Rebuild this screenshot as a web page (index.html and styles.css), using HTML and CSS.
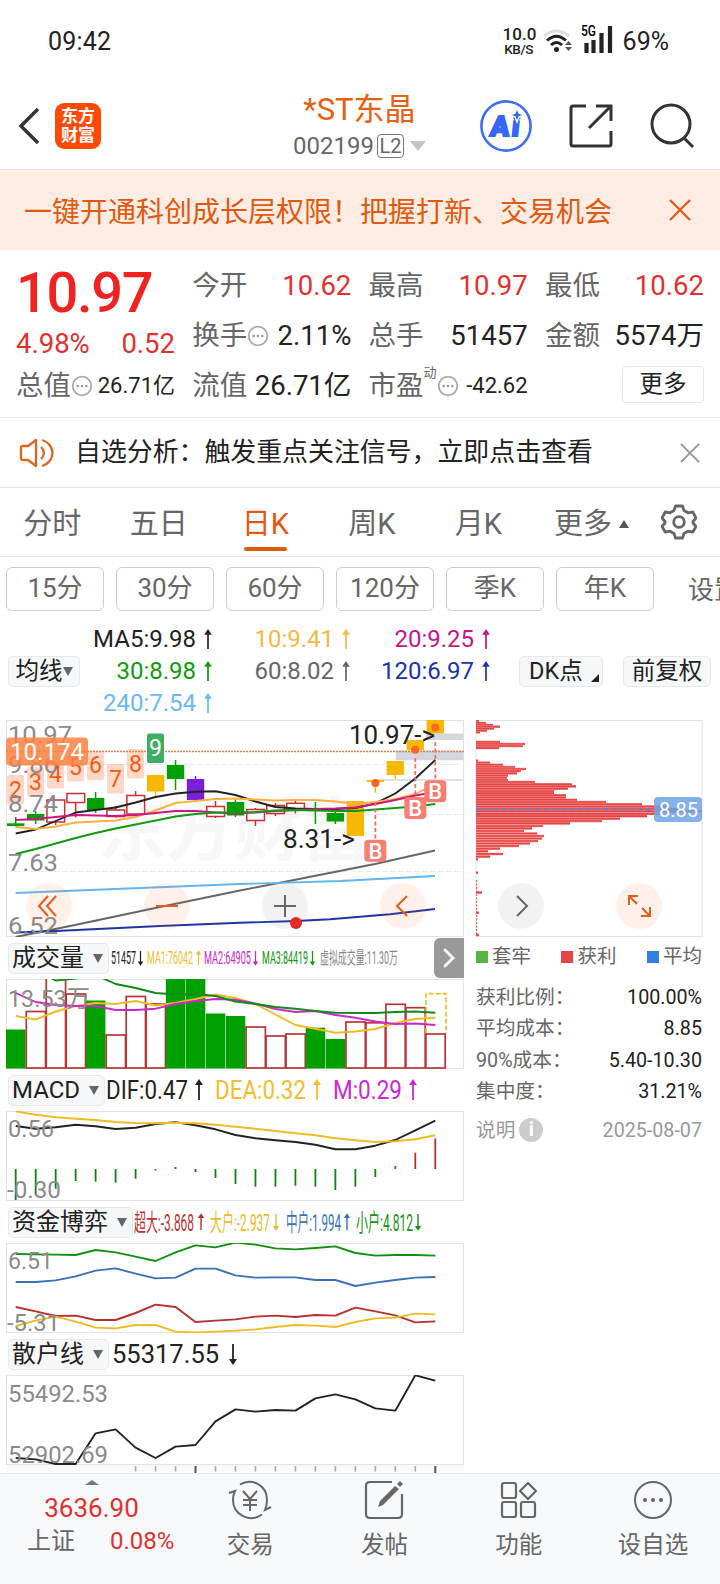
FILE: index.html
```html
<!DOCTYPE html>
<html lang="zh-CN">
<head>
    <meta charset="UTF-8">
    <meta name="viewport" content="width=device-width, initial-scale=1.0">
    <title>*ST东晶 002199</title>
    <link rel="stylesheet" href="styles.css">
</head>
<body>
    <!-- Shared icons -->
    <svg class="defs" width="0" height="0">
        <symbol id="up" viewBox="0 0 10 22"><path d="M5 21V3" fill="none" stroke="currentColor" stroke-width="1.8"/><path d="M5 0L9 6H1z" fill="currentColor"/></symbol>
        <symbol id="down" viewBox="0 0 10 22"><path d="M5 1V19" fill="none" stroke="currentColor" stroke-width="1.8"/><path d="M5 22L9 16H1z" fill="currentColor"/></symbol>
        <symbol id="dots" viewBox="0 0 22 22"><circle cx="11" cy="11" r="9.3" fill="none" stroke="#aaa" stroke-width="1.8"/><g fill="#999"><circle cx="6.7" cy="11" r="1.3"/><circle cx="11" cy="11" r="1.3"/><circle cx="15.3" cy="11" r="1.3"/></g></symbol>
        <symbol id="close" viewBox="0 0 22 22"><path d="M1 1L21 21M21 1L1 21" fill="none" stroke="currentColor" stroke-width="2.2"/></symbol>
    </svg>

    <!-- Status bar -->
    <div class="status">
        <span class="time">09:42</span>
        <div class="status-right">
            <div class="speed"><b>10.0</b><small>KB/S</small></div>
            <svg width="30" height="24" viewBox="0 0 30 24">
                <g fill="none" stroke-width="3">
                    <path d="M1 7Q13.500 -3 26 7" stroke="#ddd"/>
                    <path d="M4 11.500Q13.500 3 23 11.500" stroke="#222"/>
                    <path d="M8 16Q13.500 11 19 16" stroke="#222"/>
                </g>
                <circle cx="13.500" cy="20.500" r="2.500" fill="#222"/>
                <path d="M22 16l3.500-4 3.500 4zM22 18l3.500 4 3.500-4z" fill="#555"/>
            </svg>
            <svg class="signal" width="32" height="32" viewBox="0 0 32 32">
                <text x="0" y="12" font-size="14" font-weight="500" textLength="15" lengthAdjust="spacingAndGlyphs">5G</text>
                <path d="M5.500 19V29M12.500 16V29M20.500 9V29M29 2V29" stroke="#222" stroke-width="4.200"/>
            </svg>
            <span class="battery">69%</span>
        </div>
    </div>

    <!-- Header -->
    <div class="header">
        <svg class="back" width="22" height="38" viewBox="0 0 22 38"><path d="M20 2L3 19L20 36" fill="none" stroke="#333" stroke-width="3.500"/></svg>
        <div class="logo">东方<br>财富</div>
        <div class="title">
            <div class="name">*ST东晶</div>
            <div class="code">002199<span class="level">L2</span><i class="tri"></i></div>
        </div>
        <div class="actions">
            <svg width="54" height="54" viewBox="0 0 54 54">
                <circle cx="27" cy="27" r="24.600" fill="#fff" stroke="#3d6df5" stroke-width="2.600"/>
                <g transform="skewX(-6)"><text x="14.500" y="37" font-size="28" font-weight="900" fill="#3566f6" stroke="#3566f6" stroke-width="2" textLength="29">Ai</text></g>
                <path d="M38 9l2 5 5 2-5 2-2 5-2-5-5-2 5-2z" fill="#3566f6" stroke="#fff" stroke-width="1.500"/>
            </svg>
            <svg width="46" height="46" viewBox="0 0 46 46"><g fill="none" stroke="#333" stroke-width="3"><path d="M18 3H5Q3 3 3 5V41Q3 43 5 43H41Q43 43 43 41V28"/><path d="M28 3H43V18M43 3L21 25"/></g></svg>
            <svg width="46" height="46" viewBox="0 0 46 46"><g fill="none" stroke="#333" stroke-width="3"><circle cx="22" cy="21" r="19"/><path d="M34.500 34.500L44 44"/></g></svg>
        </div>
    </div>

    <div class="promo">
        <span>一键开通科创成长层权限！把握打新、交易机会</span>
        <svg width="22" height="22"><use href="#close"/></svg>
    </div>

    <!-- Quote -->
    <div class="quote">
        <div class="main-price">
            <div class="price">10.97</div>
            <div class="pair red change"><span>4.98%</span><span>0.52</span></div>
        </div>
        <div class="pair"><label>今开</label><span class="red">10.62</span></div>
        <div class="pair"><label>最高</label><span class="red">10.97</span></div>
        <div class="pair"><label>最低</label><span class="red">10.62</span></div>
        <div class="pair"><label>换手<svg width="22" height="22"><use href="#dots"/></svg></label><span>2.11%</span></div>
        <div class="pair"><label>总手</label><span>51457</span></div>
        <div class="pair"><label>金额</label><span>5574万</span></div>
        <div class="pair"><label>总值<svg width="22" height="22"><use href="#dots"/></svg></label><span class="small">26.71亿</span></div>
        <div class="pair"><label>流值</label><span>26.71亿</span></div>
        <div class="pair"><label>市盈<sup>动</sup><svg width="22" height="22"><use href="#dots"/></svg></label><span class="small">-42.62</span></div>
        <div class="pair"><button class="more">更多</button></div>
    </div>

    <div class="notice">
        <svg width="36" height="32" viewBox="0 0 36 32"><g fill="none" stroke="#e06420" stroke-width="2.300"><path d="M17 3V29L9 23H4Q2 23 2 21V11Q2 9 4 9H9Z" stroke-linejoin="round"/><path d="M22 10Q28 16 22 22M23 3C37 7 37 25 23 29"/></g></svg>
        <span>自选分析：触发重点关注信号，立即点击查看</span>
        <svg class="grey" width="20" height="20" viewBox="0 0 22 22"><use href="#close"/></svg>
    </div>

    <!-- Period tabs -->
    <div class="tabs">
        <span>分时</span><span>五日</span><span class="active">日K</span><span>周K</span><span>月K</span>
        <span>更多<i class="tri-up"></i></span>
        <svg width="36" height="36" viewBox="0 0 36 36"><g fill="none" stroke="#666" stroke-width="2.800" stroke-linejoin="round"><path d="M14.500 2H21.500L23 6.500L27 8.800L31.800 8L35 14L32 17.500V19L35 22.500L31.800 28L27 27.200L23 29.500L21.500 34H14.500L13 29.500L9 27.200L4.200 28L1 22.500L4 19V17.500L1 14L4.200 8L9 8.800L13 6.500Z"/><circle cx="18" cy="18" r="5.300"/></g></svg>
    </div>
    <div class="periods">
        <button>15分</button><button>30分</button><button>60分</button><button>120分</button><button>季K</button><button>年K</button><span>设置</span>
    </div>

    <!-- Moving averages -->
    <div class="ma-row">
        <button class="chip">均线<i class="tri-down"></i></button>
        <div class="ma">
            <span class="black">MA5:9.98<svg><use href="#up"/></svg></span>
            <span class="amber">10:9.41<svg><use href="#up"/></svg></span>
            <span class="pink">20:9.25<svg><use href="#up"/></svg></span>
            <span class="green">30:8.98<svg><use href="#up"/></svg></span>
            <span class="dim">60:8.02<svg><use href="#up"/></svg></span>
            <span class="navy">120:6.97<svg><use href="#up"/></svg></span>
            <span class="sky">240:7.54<svg><use href="#up"/></svg></span>
        </div>
        <button class="chip dk">DK点<i class="corner"></i></button>
        <button class="chip fq">前复权</button>
    </div>

    <div class="charts">
        <div class="left">
            <svg id="kline" class="chart" width="458" height="217" viewBox="6 720 458 217"></svg>

            <div class="bar">
                <button class="chip">成交量<i class="tri-down"></i></button>
                <svg class="legend" width="290" height="30" viewBox="110 943 290 30">
                    <g font-size="17.5">
                        <text x="111" y="964" fill="#222" textLength="25" lengthAdjust="spacingAndGlyphs">51457</text>
                        <text x="147" y="964" fill="#f0bd2b" textLength="46" lengthAdjust="spacingAndGlyphs">MA1:76042</text>
                        <text x="204" y="964" fill="#cc27cc" textLength="47" lengthAdjust="spacingAndGlyphs">MA2:64905</text>
                        <text x="262" y="964" fill="#159315" textLength="46" lengthAdjust="spacingAndGlyphs">MA3:84419</text>
                        <text x="320" y="964" fill="#888" textLength="78" lengthAdjust="spacingAndGlyphs">虚拟成交量:11.30万</text>
                    </g>
                    <use href="#down" x="137" y="950" width="7" height="16" color="#222"/>
                    <use href="#up" x="195" y="950" width="7" height="16" color="#f0bd2b"/>
                    <use href="#down" x="252" y="950" width="7" height="16" color="#cc27cc"/>
                    <use href="#down" x="309" y="950" width="7" height="16" color="#159315"/>
                </svg>
                <div class="expander"><svg width="12" height="20" viewBox="0 0 12 20"><path d="M2 2L10 10L2 18" fill="none" stroke="#fff" stroke-width="2.800" stroke-linecap="round"/></svg></div>
            </div>
            <svg id="volume" class="chart" width="458" height="90" viewBox="6 979 458 90"></svg>

            <div class="bar">
                <button class="chip macd">MACD<i class="tri-down"></i></button>
                <svg class="legend" width="320" height="30" viewBox="106 1075 320 30">
                    <g font-size="25.5">
                        <text x="106" y="1099" fill="#222" textLength="82" lengthAdjust="spacingAndGlyphs">DIF:0.47</text>
                        <text x="215" y="1099" fill="#f0bd2b" textLength="91" lengthAdjust="spacingAndGlyphs">DEA:0.32</text>
                        <text x="333" y="1099" fill="#cc27d4" textLength="69" lengthAdjust="spacingAndGlyphs">M:0.29</text>
                    </g>
                    <use href="#up" x="194" y="1079" width="10" height="22" color="#222"/>
                    <use href="#up" x="312" y="1079" width="10" height="22" color="#f0bd2b"/>
                    <use href="#up" x="408" y="1079" width="10" height="22" color="#cc27d4"/>
                </svg>
            </div>
            <svg id="macd" class="chart" width="458" height="90" viewBox="6 1111 458 90"></svg>

            <div class="bar">
                <button class="chip funds">资金博弈<i class="tri-down"></i></button>
                <svg class="legend" width="300" height="30" viewBox="134 1207 300 30">
                    <g font-size="24">
                        <text x="134" y="1230.500" fill="#c12f2f" textLength="60" lengthAdjust="spacingAndGlyphs">超大:-3.868</text>
                        <text x="210" y="1230.500" fill="#edbb29" textLength="60" lengthAdjust="spacingAndGlyphs">大户:-2.937</text>
                        <text x="286" y="1230.500" fill="#3a72ba" textLength="55" lengthAdjust="spacingAndGlyphs">中户:1.994</text>
                        <text x="356" y="1230.500" fill="#159315" textLength="57" lengthAdjust="spacingAndGlyphs">小户:4.812</text>
                    </g>
                    <use href="#up" x="197" y="1212" width="8" height="20" color="#c12f2f"/>
                    <use href="#down" x="272" y="1212" width="8" height="20" color="#edbb29"/>
                    <use href="#up" x="343" y="1212" width="8" height="20" color="#3a72ba"/>
                    <use href="#down" x="414" y="1212" width="8" height="20" color="#159315"/>
                </svg>
            </div>
            <svg id="funds" class="chart" width="458" height="90" viewBox="6 1243 458 90"></svg>

            <div class="bar">
                <button class="chip">散户线<i class="tri-down"></i></button>
                <span class="black retail">55317.55<svg><use href="#down"/></svg></span>
            </div>
            <svg id="retail" class="chart" width="458" height="98" viewBox="6 1375 458 98"></svg>
        </div>

        <!-- Cost distribution -->
        <div class="right">
            <svg id="chips" class="chart" width="228" height="217" viewBox="475 720 228 217"></svg>
            <div class="keys">
                <span><i class="k-green"></i>套牢</span><span><i class="k-red"></i>获利</span><span><i class="k-blue"></i>平均</span>
            </div>
            <div class="stat"><label>获利比例：</label><span>100.00%</span></div>
            <div class="stat"><label>平均成本：</label><span>8.85</span></div>
            <div class="stat"><label>90%成本：</label><span>5.40-10.30</span></div>
            <div class="stat"><label>集中度：</label><span>31.21%</span></div>
            <div class="stat note"><label>说明<b>i</b></label><span>2025-08-07</span></div>
        </div>
    </div>

    <!-- Bottom navigation -->
    <div class="nav">
        <div class="index">
            <i class="tri-up"></i>
            <div class="red value">3636.90</div>
            <div class="sub"><span>上证</span><span class="red">0.08%</span></div>
        </div>
        <div class="item">
            <svg width="44" height="40" viewBox="0 0 44 40"><g fill="none" stroke="#666" stroke-width="2"><path d="M12 4.500C23 -2 39 4 39 20Q39 25 37 30L43 27M34 34.500C22 43 5 35 5 20Q5 15 7 11L1 13"/><path d="M15 11L22 19L29 11M22 19V31M15 20H29M15 25H29"/></g></svg>
            <span>交易</span>
        </div>
        <div class="item">
            <svg width="44" height="40" viewBox="0 0 44 40"><path d="M30 2H8Q4 2 4 6V34Q4 38 8 38H36Q40 38 40 34V14" fill="none" stroke="#666" stroke-width="2.200"/><path d="M33 6L37 9L21 25L16 27L18 21Z" fill="#666"/><path d="M35 4L38 1L41 4L38 7Z" fill="#666"/></svg>
            <span>发帖</span>
        </div>
        <div class="item">
            <svg width="44" height="40" viewBox="0 0 44 40"><g fill="none" stroke="#666" stroke-width="2.200"><rect x="5" y="3" width="14" height="15" rx="2"/><rect x="5" y="22" width="14" height="15" rx="2"/><rect x="24" y="22" width="14" height="15" rx="2"/><path d="M31 3L39 11L31 19L23 11Z" stroke-linejoin="round"/></g></svg>
            <span>功能</span>
        </div>
        <div class="item">
            <svg width="44" height="40" viewBox="0 0 44 40"><circle cx="22" cy="20" r="18" fill="none" stroke="#666" stroke-width="2"/><g fill="#666"><circle cx="14" cy="20" r="2"/><circle cx="22" cy="20" r="2"/><circle cx="30" cy="20" r="2"/></g></svg>
            <span>设自选</span>
        </div>
    </div>

    <script src="charts.js"></script>
</body>
</html>
```

FILE: styles.css
```css
/* General styling */
* {
    box-sizing: border-box;
}

body {
    margin: 0;
    width: 720px;
    height: 1584px;
    overflow: hidden;
    background: #fff;
    color: #222;
    font-family: Roboto, "Noto Sans CJK SC", sans-serif;
    display: flex;
    flex-direction: column;
}

button {
    font-family: inherit;
    color: inherit;
    padding: 0;
    background: #fff;
}

svg {
    display: block;
    flex-shrink: 0;
}

.defs {
    position: absolute;
}

.red { color: #e03030; }
.black { color: #222; }
.amber { color: #f5b942; }
.pink { color: #c71585; }
.green { color: #109a10; }
.dim { color: #666; }
.navy { color: #1c34a4; }
.sky { color: #69b8f0; }

/* Status bar */
.status {
    height: 80px;
    padding: 2px 51px 0 48px;
    display: flex;
    justify-content: space-between;
    align-items: center;
    font-size: 25px;
}

.status-right {
    display: flex;
    align-items: center;
}

.speed {
    width: 32px;
    margin-right: 8px;
    text-align: center;
}

.speed b {
    display: block;
    font-size: 17px;
    line-height: 17px;
    font-weight: 500;
}

.speed small {
    display: block;
    font-size: 13.500px;
    line-height: 13px;
    font-weight: 500;
    letter-spacing: -0.4px;
}

.signal {
    margin: 0 10px 2px 8px;
}

.time {
    letter-spacing: 0.2px;
}

/* Header */
.header {
    height: 90px;
    border-bottom: 1px solid #e4e4e4;
    display: grid;
    grid-template-columns: 18px 37px 46px 1fr 220px;
    align-items: center;
    padding-top: 2px;
}

.back {
    grid-column: 2;
}

.logo {
    width: 46px;
    height: 46px;
    border-radius: 9px;
    background: #ff4a05;
    color: #fff;
    font-size: 17px;
    line-height: 19px;
    font-weight: bold;
    text-align: center;
    padding-top: 4px;
}

.title {
    padding: 5px 0 0 118px;
    width: 399px;
    text-align: center;
}

.title .name {
    font-size: 31px;
    line-height: 36px;
    color: #e6600f;
}

.title .code {
    display: flex;
    justify-content: center;
    align-items: center;
    font-size: 24px;
    line-height: 30px;
    height: 37px;
    color: #666;
}

.level {
    border: 1px solid #777;
    border-radius: 4px;
    width: 27px;
    height: 24px;
    line-height: 23px;
    font-size: 20px;
    margin: 0 6px 0 3px;
}

.tri {
    border: 8px solid transparent;
    border-top: 10px solid #c4c4c4;
    border-bottom: 0;
}

.actions {
    grid-column: 5;
    display: flex;
    align-items: center;
    justify-content: flex-end;
    gap: 35px;
    padding-right: 25px;
}

.promo {
    height: 80px;
    background: #fcece3;
    color: #e0590f;
    font-size: 28px;
    display: flex;
    justify-content: space-between;
    align-items: center;
    padding: 0 29px 0 24px;
}

/* Quote */
.quote {
    height: 168px;
    border-bottom: 1px solid #eee;
    display: grid;
    grid-template-columns: repeat(4, 159px);
    grid-template-rows: repeat(3, 50px);
    column-gap: 17.300px;
    padding: 10.500px 16px 0 16px;
}

.main-price {
    grid-row: span 2;
    color: #f02222;
}

.price {
    font-size: 56px;
    font-weight: 500;
    line-height: 65px;
    letter-spacing: -1.300px;
    height: 65px;
}

.pair {
    display: flex;
    justify-content: space-between;
    align-items: center;
    font-size: 27.500px;
    line-height: 40px;
    white-space: nowrap;
}

.pair label {
    color: #666;
    display: flex;
    align-items: center;
}

.pair sup {
    font-size: 13px;
    line-height: 14px;
    margin-bottom: 26px;
}

.change {
    height: 36px;
}

.pair .small {
    font-size: 22px;
}

.more {
    margin-left: auto;
    width: 82px;
    height: 37px;
    border: 1px solid #e6e6e6;
    border-radius: 4px;
    font-size: 23.500px;
    line-height: 33px;
    margin-bottom: 2px;
}

.notice {
    height: 70px;
    border-bottom: 1px solid #e4e4e4;
    display: flex;
    align-items: center;
    padding: 0 20px 0 19px;
    font-size: 25.900px;
    line-height: 36px;
}

.notice span {
    margin: 0 auto 2px 20px;
}

.grey {
    color: #999;
}

/* Tabs */
.tabs {
    height: 69px;
    border-bottom: 1px solid #e4e4e4;
    display: grid;
    grid-template-columns: repeat(5, 106.500px) 120px 53px;
    align-items: center;
    justify-items: center;
    font-size: 29px;
    color: #666;
}

.tabs span {
    height: 68px;
    line-height: 64px;
    padding-top: 4px;
    display: flex;
    align-items: center;
    margin-left: -2px;
}

.tabs .active {
    color: #e0590f;
    position: relative;
}

.tabs .active::after {
    content: "";
    position: absolute;
    left: 2px;
    right: 2px;
    bottom: 5px;
    height: 4px;
    border-radius: 2px;
    background: #e0590f;
}

.tri-up {
    border: 5px solid transparent;
    border-bottom: 8px solid #555;
    border-top: 0;
    margin-left: 7px;
}

.tri-down {
    display: inline-block;
    border: 5px solid transparent;
    border-top: 9px solid #666;
    border-bottom: 0;
}

.periods {
    display: flex;
    gap: 12px;
    padding: 10px 0 0 6px;
    height: 65px;
    color: #666;
    font-size: 26px;
    line-height: 46px;
    white-space: nowrap;
}

.periods button {
    width: 98px;
    height: 44px;
    border: 1px solid #ccc;
    border-radius: 6px;
    font-size: 26px;
    line-height: 40px;
    padding-bottom: 2px;
    flex-shrink: 0;
}

.periods span {
    margin-left: 22px;
}

/* Moving averages */
.ma-row {
    height: 98px;
    display: flex;
    align-items: center;
    padding-left: 8px;
}

.chip {
    height: 31px;
    border: 1px solid #e6e8eb;
    border-radius: 5px;
    background: #f6f7f9;
    font-size: 24px;
    line-height: 27px;
    white-space: nowrap;
    display: flex;
    align-items: center;
    justify-content: center;
    flex-shrink: 0;
}

.ma-row .chip {
    width: 72px;
    font-size: 23.500px;
}

.ma {
    display: grid;
    grid-template-columns: 133px 138px 140px;
    grid-auto-rows: 32px;
    font-size: 24px;
}

.ma span,
.bar span {
    display: flex;
    justify-content: flex-end;
    align-items: center;
}

.ma svg,
.bar span svg {
    width: 10px;
    height: 21px;
    margin-left: 7px;
}

.ma-row .dk {
    width: 84px;
    margin: 0 20px 0 28px;
    justify-content: space-between;
    padding: 0 3px 0 9px;
}

.ma-row .fq {
    width: 88px;
}

.corner {
    border-left: 8px solid transparent;
    border-bottom: 8px solid #222;
    margin-top: 14px;
}

/* Charts */
.charts {
    display: flex;
    gap: 11px;
    padding-left: 6px;
    height: 753px;
}

.left {
    width: 458px;
}

.right {
    width: 228px;
}

.bar {
    height: 42px;
    display: flex;
    align-items: center;
    padding-left: 2px;
    font-size: 25.500px;
    position: relative;
}

.bar .chip {
    width: 101px;
    justify-content: space-between;
    padding: 0 5px 0 3px;
}

.bar .macd {
    width: 97px;
}

.bar .funds {
    width: 125px;
}

.bar span svg {
    height: 22px;
    margin-left: 9px;
}

.bar .retail {
    margin-left: 3px;
}

.legend {
    margin-left: 1px;
}

.expander {
    position: absolute;
    right: 0;
    top: 1px;
    width: 30px;
    height: 40px;
    background: #999;
    border-radius: 6px 0 0 6px;
    display: flex;
    align-items: center;
    justify-content: center;
}

.chart text {
    font-family: Roboto, "Noto Sans CJK SC", sans-serif;
}

.keys {
    display: flex;
    justify-content: space-between;
    height: 39px;
    align-items: center;
    font-size: 19.500px;
    line-height: 30px;
    color: #666;
    padding: 0 1px;
}

.keys span {
    display: flex;
    align-items: center;
}

.keys i {
    width: 12px;
    height: 12px;
    margin-right: 4px;
}

.k-green { background: #58b447; }
.k-red { background: #e64545; }
.k-blue { background: #3080e2; }

.stat {
    height: 31.500px;
    display: flex;
    justify-content: space-between;
    align-items: center;
    padding: 0 1px;
    font-size: 19.700px;
    line-height: 31px;
}

.stat:nth-child(3) {
    margin-top: 5.500px;
}

.stat label {
    color: #666;
    display: flex;
    align-items: center;
}

.note,
.note label {
    color: #999;
}

.stat.note {
    margin-top: 7px;
}

.note b {
    width: 24px;
    height: 24px;
    line-height: 24px;
    margin-left: 4px;
    border-radius: 50%;
    background: #ccc;
    color: #fff;
    text-align: center;
}

/* Bottom navigation */
.nav {
    height: 111px;
    background: #f7f8fa;
    border-top: 1px solid #e6e8eb;
    display: grid;
    grid-template-columns: 183px repeat(4, 134.300px);
    color: #666;
    font-size: 24px;
}

.index {
    display: flex;
    flex-direction: column;
    align-items: center;
    padding-top: 6px;
}

.index .tri-up {
    border-width: 0 7px 5px;
    border-bottom-color: #777;
    margin: 0;
}

.index .value {
    font-size: 26px;
    line-height: 34px;
    margin-top: 6px;
}

.index .sub {
    display: flex;
    gap: 35px;
    line-height: 32px;
    padding-left: 27px;
    width: 183px;
}

.item {
    display: flex;
    flex-direction: column;
    align-items: center;
    padding-top: 6px;
    font-size: 23.500px;
}

.item span {
    line-height: 32px;
    margin-top: 9px;
}
```

FILE: charts.js
```js
const NS = "http://www.w3.org/2000/svg";
const STEP = 19.98;
const X0 = 15.7;

function add(id, tag, attrs, text) {
    const el = document.createElementNS(NS, tag);
    for (const k in attrs) el.setAttribute(k, attrs[k]);
    if (text) el.textContent = text;
    document.getElementById(id).appendChild(el);
    return el;
}

function cx(i) {
    return X0 + i * STEP;
}

function path(id, d, stroke, width, extra) {
    return add(id, "path", Object.assign({ d: d, fill: "none", stroke: stroke, "stroke-width": width || 1.7 }, extra));
}

function polyline(id, points, color) {
    add(id, "polyline", { points: points.join(" "), fill: "none", stroke: color, "stroke-width": 1.9, "stroke-linejoin": "round" });
}

// one value per trading day
function series(id, values, color) {
    polyline(id, values.map((v, i) => cx(i) + "," + v), color);
}

function frame(id, x, y, w, h) {
    add(id, "rect", { x: x + 0.5, y: y + 0.5, width: w - 1, height: h - 1, fill: "none", stroke: "#e2e2e2" });
}

function label(id, x, y, text, width, color, size) {
    add(id, "text", { x: x, y: y, "font-size": size || 24, fill: color || "#8a8a8a", textLength: width, lengthAdjust: "spacingAndGlyphs" }, text);
}

function kline() {
    const id = "kline";
    add(id, "text", { x: 98, y: 855, "font-size": 68, "font-weight": "bold", fill: "#f7f7f7" }, "东方财富");
    for (const y of [764.5, 814.5, 871.5]) path(id, `M6 ${y}H464`, "#ebebeb", 1, { "stroke-dasharray": "6 2" });
    frame(id, 6, 720, 458, 217);

    // price gaps
    add(id, "rect", { x: 426, y: 733.5, width: 37, height: 6.5, fill: "#d4d7dd" });
    add(id, "rect", { x: 395.7, y: 750.3, width: 67.5, height: 10, fill: "#d4d7dd" });
    path(id, "M376 780H463", "#d4d7dd", 1.5);

    // type, body top, body bottom, wick top, wick bottom
    const candles = [
        ["g", 823.3, 826, 817, 826.5], ["g", 814, 820.5, 811, 824], ["r", 800, 822, 800, 825], ["r", 793.5, 802.5, 793.5, 817.5],
        ["g", 798, 810, 792, 813], ["r", 810, 816.5, 806, 817.5], ["r", 795.5, 814, 791, 814], ["y", 775, 791.5, 775, 796],
        ["g", 765, 779, 760, 790], ["p", 779, 800, 776, 800], ["r", 806.5, 816.5, 801, 818], ["g", 802, 815.5, 798, 817],
        ["r", 809.5, 820.5, 808, 826], ["r", 805.5, 813.5, 803, 816], ["r", 803.3, 809, 801, 813.5], ["g", 808.5, 810, 802, 824],
        ["g", 813, 821.5, 810, 824], ["y", 801, 836, 801, 836], ["y", 780, 782, 780, 792.5], ["y", 761, 775, 761, 779],
        ["y", 740, 750, 740, 750], ["y", 720, 733.5, 720, 733.5]
    ];
    const colors = { g: "#00a000", r: "#c92f35", y: "#f7b900", p: "#7a1fdc" };
    candles.forEach((c, i) => {
        const color = colors[c[0]];
        const x = cx(i);
        if (c[0] === "r") {
            path(id, `M${x} ${c[3]}V${c[1]}M${x} ${c[2]}V${c[4]}`, color, 1.5);
            add(id, "rect", { x: x - 8.7, y: c[1], width: 17.7, height: c[2] - c[1], fill: "#fff", stroke: color, "stroke-width": 1.5 });
        } else {
            path(id, `M${x} ${c[3]}V${c[4]}`, color, 1.5);
            add(id, "rect", { x: x - 8.7, y: c[1], width: 17.4, height: c[2] - c[1], fill: color });
        }
    });

    series(id, [833.5, 829.5, 821, 812.5, 810, 807.5, 802.5, 797, 793.5, 791.8, 791.3, 795, 801.5, 807, 808.5, 809, 809, 808, 803.3, 793.5, 778.5, 760], "#222");
    series(id, [827, 829, 826.5, 822.5, 821.5, 820.5, 817, 810.5, 803, 801, 799, 798.5, 799.5, 800.5, 800, 800, 801.5, 804, 802, 799, 794, 784], "#fbb03c");
    series(id, [820, 819, 817, 815, 815.5, 816, 815, 813, 811, 811, 812.5, 813.5, 812.5, 811, 810, 809, 808.5, 807.5, 804, 800, 795.5, 792], "#cc1587");
    series(id, [854, 849, 843.5, 838, 833, 828.5, 824.5, 820.5, 816.5, 814, 812.5, 812.5, 812, 810.5, 810, 810.5, 811, 811, 809.5, 808, 806.5, 804], "#109a10");
    polyline(id, ["15.7,937", "75,925", "160,907", "240,890.5", "294,880", "375,864", "435,850.5"], "#666");
    polyline(id, ["15.7,893", "240,884", "340,881", "435,876"], "#63b5f0");
    polyline(id, ["15.7,932.5", "56,931", "160,926", "240,922.8", "296,921", "330,919.3", "390,914.3", "435,909"], "#1e34a8");
    path(id, "M6 751.5H464", "#cf8550", 1.3, { "stroke-dasharray": "2 1" });

    // nine-turn counters
    const turns = [[7, 775, 2], [27, 767, 3], [47, 759, 4], [67, 752, 5], [87, 750.5, 6], [107, 764, 7], [127, 749, 8], [147, 733.5, 9]];
    for (const t of turns) {
        add(id, "rect", { x: t[0], y: t[1], width: 17, height: 29.5, rx: 2, fill: t[2] === 9 ? "#3fae60" : "#ff7b43", "fill-opacity": t[2] === 9 ? 1 : 0.3 });
        add(id, "text", { x: t[0] + 8.5, y: t[1] + 22.5, "font-size": 23, "text-anchor": "middle", fill: t[2] === 9 ? "#fff" : "#f75b13" }, String(t[2]));
    }

    label(id, 8, 743, "10.97", 64);
    label(id, 8, 773, "9.86", 50);
    label(id, 8, 812, "8.74", 50);
    label(id, 8, 871, "7.63", 50);
    label(id, 8, 934, "6.52", 50);
    add(id, "rect", { x: 6, y: 737.5, width: 82, height: 28, rx: 4, fill: "#ff8040", "fill-opacity": 0.85 });
    label(id, 10, 759.5, "10.174", 74, "#fff");
    label(id, 349, 744, "10.97->", 86, "#222", 25.5);
    label(id, 283, 848, "8.31->", 72, "#222", 25.5);

    // buy marks
    for (const b of [[18, 783, 802, 850.7], [20, 749.7, 758, 808], [21, 727.5, 742, 791.3]]) {
        const x = cx(b[0]);
        add(id, "circle", { cx: x, cy: b[1], r: 4, fill: "#ff6422" });
        path(id, `M${x} ${b[2]}V${b[3] - 11}`, "#f56f62", 1.8, { "stroke-dasharray": "4 2.5" });
        add(id, "rect", { x: x - 11, y: b[3] - 11, width: 22, height: 22, rx: 4, fill: "#f97d70" });
        add(id, "text", { x: x, y: b[3] + 8, "font-size": 22, "font-weight": 500, "text-anchor": "middle", fill: "#fff" }, "B");
    }

    round(id, 49, "o", "M48 896L39 906L48 916M56 896L47 906L56 916");
    round(id, 167, "o", "M156 906H178");
    round(id, 285, "g", "M274 906H296M285 895V917");
    add(id, "circle", { cx: 296, cy: 923, r: 6, fill: "#e62a2a" });
    round(id, 403, "o", "M407 896L397 906L407 916");
}

// round tool buttons at the foot of the charts
function round(id, x, kind, d) {
    const orange = kind === "o";
    add(id, "circle", { cx: x, cy: 906, r: 23, fill: orange ? "#ff7026" : "#555", "fill-opacity": orange ? 0.1 : 0.08 });
    path(id, d, orange ? "#e0601c" : "#666", 2);
}

function volume() {
    const id = "volume";
    frame(id, 6, 979, 458, 90);
    const bars = [["g", 1029.5], ["r", 1011.5], ["r", 970], ["r", 994], ["g", 1000.5], ["r", 1035], ["r", 996.5], ["r", 1004], ["g", 979], ["g", 979], ["g", 1013.5],
        ["g", 1016], ["r", 1027], ["r", 1036], ["r", 1034], ["g", 1027.7], ["g", 1039], ["r", 1022], ["r", 1022.8], ["r", 1004.3], ["r", 1007.7], ["r", 1034]];
    bars.forEach((b, i) => {
        const x = cx(i) - 9.7;
        if (b[0] === "g") add(id, "rect", { x: x, y: b[1], width: 19.5, height: 1068.5 - b[1], fill: "#00a000" });
        else add(id, "rect", { x: x + 0.3, y: b[1], width: 19.3, height: 1068 - b[1], fill: "#fff", stroke: "#b83434", "stroke-width": 1.7 });
    });
    path(id, "M426 1033V993.7H446V1033", "#f0bd2b", 1.7, { "stroke-dasharray": "5 2" });
    series(id, [1016, 1019.5, 1011.5, 1006, 1003, 1004, 1001, 1005.5, 1003, 999, 994.5, 998, 1004, 1014.5, 1025, 1028.7, 1032.7, 1031.5, 1029, 1023, 1019, 1017.7], "#efbb24");
    series(id, [993, 1002, 1005, 1006, 1006, 1010, 1010, 1008.7, 1004, 1001, 999, 999.7, 1003.5, 1009, 1012, 1011, 1015, 1017.7, 1021.5, 1024, 1023.5, 1025], "#cc27cc");
    series(id, [960, 970, 980.5, 978.5, 975, 984, 988, 993, 994.5, 994, 996, 1001.5, 1004, 1007, 1008.7, 1011, 1012.7, 1013, 1013, 1012, 1011.5, 1012.7], "#108a18");
    label(id, 8, 1007, "13.53万", 82);
}

function macd() {
    const id = "macd";
    frame(id, 6, 1111, 458, 90);
    const ends = [1200, 1195, 1188.7, 1181, 1181.7, 1182.7, 1178.7, 1170.5, 1167, 1172, 1178, 1184, 1186.7, 1186.7, 1185.7, 1186.7, 1190, 1186.7, 1177, 1166, 1152.7, 1138.5];
    ends.forEach((y, i) => path(id, `M${cx(i)} 1169V${y}`, y < 1169 ? "#a83232" : "#128012", 1.8));
    series(id, [1126, 1128.7, 1127.3, 1124.7, 1126.3, 1129, 1127.7, 1124, 1122.3, 1125.3, 1129.3, 1135, 1138.3, 1140.3, 1142, 1144.7, 1149.3, 1149.3, 1145.7, 1140, 1130.3, 1120.7], "#222");
    series(id, [1111.3, 1114.7, 1117.3, 1118.7, 1120, 1122, 1123, 1123.3, 1122.7, 1123.3, 1124.7, 1126.7, 1128.7, 1131, 1133.3, 1135.3, 1138.3, 1140.3, 1142, 1141.3, 1139.3, 1135.3], "#efbb24");
    label(id, 8, 1137.3, "0.56", 46);
    label(id, 7, 1198, "-0.30", 54);
}

function funds() {
    const id = "funds";
    const y = v => 1200 + v / 3;
    frame(id, 6, 1243, 458, 90);
    series(id, [162, 163, 164, 165, 150, 157, 170, 183, 157, 136, 142, 128, 134, 145, 148, 144, 139, 159, 167, 165, 165, 167].map(y), "#109010");
    series(id, [246, 246, 241, 229, 212, 205, 221, 235, 233, 206, 206, 226, 233, 232, 232, 240, 240, 258, 248, 240, 233, 231].map(y), "#3870b8");
    series(id, [321, 334, 348, 347, 360, 360, 339, 314, 321, 366, 362, 358, 350, 347, 351, 345, 347, 323, 334, 346, 367, 364].map(y), "#b82f2f");
    series(id, [378, 362, 350, 365, 383, 385, 375, 375, 395, 397, 395, 392, 388, 381, 375, 377, 381, 366, 355, 353, 341, 343].map(y), "#efbb24");
    label(id, 8, 1269, "6.51", 45);
    label(id, 7, 1331, "-5.31", 53);
}

function retail() {
    const id = "retail";
    add(id, "rect", { x: 6, y: 1465, width: 458, height: 9, fill: "#fafafa" });
    frame(id, 6, 1375, 458, 90);
    series(id, [384, 388, 402, 402, 310, 298, 353, 384, 350, 345, 274, 238, 245, 240, 242, 205, 193, 208, 235, 242, 136, 152].map(v => 1330 + v / 3), "#222");
    label(id, 8, 1401.5, "55492.53", 100);
    label(id, 8, 1463, "52902.69", 100);
    for (let i = 6; i < 22; i++) {
        const major = i === 9 || i === 21;
        path(id, `M${cx(i)} 1466V${major ? 1474 : 1471.5}`, major ? "#555" : "#aaa", major ? 2 : 1.6);
    }
}

function chips() {
    const id = "chips";
    frame(id, 475.5, 720, 227, 217);
    // price level and bar length
    const rows = [[721, 3], [723, 10], [725, 17], [726.7, 24], [728.5, 18], [730.5, 11], [732.3, 4],
        [742, 24], [744, 49], [746, 47], [748, 23],
        [760.7, 2], [762.7, 14], [764.8, 27], [767, 39], [769, 50], [771, 45], [773.3, 41], [775.5, 32], [777.7, 31], [780, 32], [782, 59],
        [784.3, 96], [786.4, 100], [788.6, 92], [791, 78], [793.2, 78], [795.4, 90], [797.6, 90], [799.8, 101], [802, 130], [804.3, 166],
        [806.6, 190], [809, 208], [811.4, 226], [813.8, 186], [816.2, 171], [818.6, 144], [821, 126], [823.4, 94], [826, 67], [828.4, 56], [831, 48],
        [833.5, 61], [836, 68], [838.5, 66], [841, 62], [843.5, 54], [846, 43], [848.6, 24], [851.3, 12], [854, 27], [856.6, 14], [859.3, 2],
        [872.7, 2], [892.5, 6], [912.7, 3], [935, 3]];
    for (const r of rows) {
        path(id, `M476 ${r[0]}h${r[1]}`, "#f0908c", 2.6);
        path(id, `M476 ${r[0]}h${r[1]}`, "#e64444", 1.7);
    }
    path(id, "M476.7 880V936", "#e64444", 1, { "stroke-dasharray": "2 1.5" });
    path(id, "M476 809.3H655", "#4a86e8", 1.8, { "stroke-dasharray": "4.5 4" });
    add(id, "rect", { x: 654, y: 797, width: 48, height: 25, rx: 4, fill: "#6ea3e6", "fill-opacity": 0.85 });
    label(id, 659, 816.5, "8.85", 39, "#fff", 20);
    round(id, 521, "g", "M517 896L527 906L517 916");
    round(id, 639, "o", "M629 905V896H638M629 896L637 904M641 916H650V907M650 916L642 908");
}

kline();
volume();
macd();
funds();
retail();
chips();
```
